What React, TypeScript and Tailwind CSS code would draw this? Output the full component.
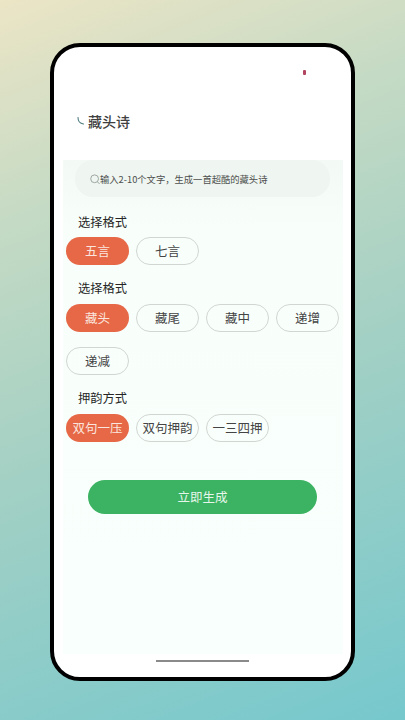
const font = { fontFamily: '"Noto Sans CJK SC", "Noto Sans", sans-serif' };

function Chip({ label, active }: { label: string; active?: boolean }) {
  return (
    <div
      className={
        active
          ? "flex h-7 w-[63px] items-center justify-center rounded-full bg-[#e66847] text-[12.5px] text-[#fbe6df]"
          : "flex h-7 w-[63px] items-center justify-center rounded-full border border-[#d2d6d3] text-[12.5px] text-[#444444]"
      }
    >
      {label}
    </div>
  );
}

function Label({ text }: { text: string }) {
  return <div className="h-[18px] pl-[15px] text-[12.25px] leading-[18px] text-[#262626]">{text}</div>;
}

export default function App() {
  return (
    <div
      className="h-[720px] w-[405px] overflow-hidden bg-[linear-gradient(158deg,#ece5c6_0%,#c4dac4_26%,#a3d0c4_55%,#76c8cd_100%)] pl-[50px] pt-[43px]"
      style={font}
    >
      <div className="flex h-[638px] w-[305px] flex-col rounded-[30px] border-4 border-black bg-white">
        <div className="flex h-[32px] justify-end pr-[45px] pt-[23px]">
          <div className="h-[5px] w-[3px] rounded-[1px] bg-[#b2455f]" />
        </div>
        <div className="mt-[32px] flex h-5 items-center pl-[23px]">
          <svg width="7" height="9" viewBox="0 0 7 9" fill="none" className="mr-[4px]">
            <path d="M1 .5C1 4 2.5 6.5 6.5 7" stroke="#4f7d80" strokeWidth="1.1" strokeLinecap="round" />
          </svg>
          <span className="text-[14px] font-medium leading-5 text-[#404040]">藏头诗</span>
        </div>
        <div className="ml-[9px] mr-[8px] mt-[29px] flex h-[494px] flex-col bg-[linear-gradient(180deg,#f3faf6_0%,#f8fffb_14%,#f9fffc_100%)]">
          <div className="ml-[12px] mr-[13px] flex h-[37px] items-center rounded-[18px] bg-[#eff5f0] pl-[15px]">
            <svg width="10" height="11" viewBox="0 0 10 11" fill="none" className="mt-[1px] shrink-0">
              <circle cx="4.6" cy="4.8" r="3.9" stroke="#8a9490" strokeWidth="0.8" />
              <path d="M7.4 7.7 9.6 10" stroke="#8a9490" strokeWidth="0.8" />
            </svg>
            <span className="text-[9.3px] leading-3 text-[#4d4f4e]">输入2-10个文字，生成一首超酷的藏头诗</span>
          </div>

          <div className="mt-4">
            <Label text="选择格式" />
          </div>
          <div className="mt-[6px] flex gap-[7px] pl-[3px]">
            <Chip label="五言" active />
            <Chip label="七言" />
          </div>

          <div className="mt-[14px]">
            <Label text="选择格式" />
          </div>
          <div className="mt-[7px] flex w-[280px] flex-wrap gap-x-[7px] gap-y-[15px] pl-[3px]">
            <Chip label="藏头" active />
            <Chip label="藏尾" />
            <Chip label="藏中" />
            <Chip label="递增" />
            <Chip label="递减" />
          </div>

          <div className="mt-[14px]">
            <Label text="押韵方式" />
          </div>
          <div className="mt-[7px] flex gap-[7px] pl-[3px]">
            <Chip label="双句一压" active />
            <Chip label="双句押韵" />
            <Chip label="一三四押" />
          </div>

          <div className="ml-[25px] mt-[38px] flex h-[34px] w-[229px] items-center justify-center rounded-full bg-[#3bb362] text-[12.5px] text-[#e6f6ea]">
            立即生成
          </div>
        </div>
        <div className="mx-auto mt-[6px] h-[2px] w-[93px] bg-[#8a8a8a]" />
      </div>
    </div>
  );
}
